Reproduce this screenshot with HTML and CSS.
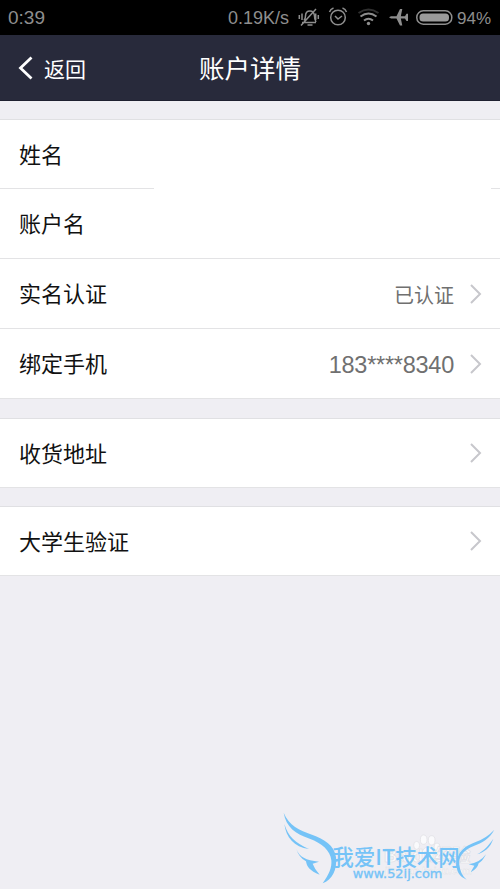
FILE: index.html
```html
<!DOCTYPE html>
<html lang="zh-CN">
<head>
<meta charset="utf-8">
<title>账户详情</title>
<link rel="stylesheet" href="styles.css">
</head>
<body>
<div class="status">
  <span class="time">0:39</span>
  <span class="speed">0.19K/s</span>
  <svg class="icons" width="157" height="35" viewBox="0 0 157 35" fill="none" stroke="#8e8e8e" stroke-width="1.500">
    <path d="M6 22.500h14M8 20.500q1.500-2 1.500-4.500q0-5 4.500-5q4 0 4.500 5q0 3 1.500 6M11.500 25h5M5 25.500L20 9"/>
    <path d="M3.300 15v4M6 13.500v6.500M19.700 13.500v6.500M22.300 15v4"/>
    <circle cx="42" cy="17.500" r="7.300"/>
    <path d="M39 16l3 3 4-3M33.500 12q1-3 4-4M50.500 12q-1-3-4-4"/>
    <path d="M62.500 13q10-7 20 0" stroke="#303030" stroke-width="2"/>
    <path d="M64.500 16.500q8-6 16 0M68 20.500q4.500-3.500 9 0" stroke-width="2"/>
    <circle cx="72.500" cy="23.500" r="1.700" fill="#8e8e8e" stroke="none"/>
    <path d="M93 17.300l2-1.100h5.500L104 9h2.300l-1.500 7.200h4.200l1.500-2.500h1.500v7.200h-1.500l-1.500-2.500h-4.200l1.500 7.200H104l-3.500-7.200H95z" fill="#8e8e8e" stroke="none"/>
    <rect x="120.800" y="10.800" width="35" height="13.400" rx="6.500"/>
    <rect x="123.500" y="13.500" width="29.500" height="8" rx="3.500" fill="#9a9a9a" stroke="none"/>
  </svg>
  <span class="percent">94%</span>
</div>
<header class="nav">
  <svg class="back" width="16" height="26" viewBox="0 0 16 26"><path d="M13.500 2.500L2.500 13l11 10.500" fill="none" stroke="#fff" stroke-width="2.800"/></svg>
  <span class="back-label">返回</span>
  <h1>账户详情</h1>
</header>
<main>
  <section class="group">
    <div class="row first"><span class="label">姓名</span></div>
    <div class="row"><span class="label">账户名</span></div>
    <div class="row"><span class="label">实名认证</span><span class="value">已认证</span><svg class="chevron" width="14" height="22" viewBox="0 0 14 22"><path d="M2 2l9 9-9 9"/></svg></div>
    <div class="row"><span class="label">绑定手机</span><span class="value phone">183****8340</span><svg class="chevron" width="14" height="22" viewBox="0 0 14 22"><path d="M2 2l9 9-9 9"/></svg></div>
  </section>
  <section class="group">
    <div class="row short"><span class="label">收货地址</span><svg class="chevron" width="14" height="22" viewBox="0 0 14 22"><path d="M2 2l9 9-9 9"/></svg></div>
  </section>
  <section class="group last">
    <div class="row short"><span class="label">大学生验证</span><svg class="chevron" width="14" height="22" viewBox="0 0 14 22"><path d="M2 2l9 9-9 9"/></svg></div>
  </section>
</main>
<svg class="watermark" width="230" height="89" viewBox="0 0 690 267">
  <g class="baidu">
    <ellipse cx="440" cy="136" rx="9" ry="12"/><ellipse cx="461" cy="119" rx="10" ry="14"/><ellipse cx="485" cy="121" rx="10" ry="14"/><ellipse cx="501" cy="141" rx="9" ry="12"/>
    <path d="M474 141q13 0 18 19q9 14-5 22h-27q-14-8-5-22q6-19 19-19z"/>
    <text class="baidu-name" x="342" y="187" textLength="260" lengthAdjust="spacingAndGlyphs">Baidu经验</text>
    <text class="baidu-url" x="345" y="221" textLength="260" lengthAdjust="spacingAndGlyphs">jingyan.baidu.com</text>
  </g>
  <g class="wings">
    <path d="M41 38C57 76 88 91 126 104C163 117 193 136 198 171C202 209 187 239 158 250C177 224 186 203 184 181C181 151 156 130 119 116C77 101 48 82 41 38z"/>
    <path d="M43 72C55 111 76 128 117 147C72 142 48 112 43 72z"/>
    <path d="M79 147C88 171 107 181 147 185L128 191Q134 208 149 224C119 213 110 199 108 184Q87 173 79 147z"/>
    <path d="M673 89C658 117 638 127 613 137C578 151 565 171 568 194C570 213 577 228 590 239C568 230 558 214 560 190C562 155 583 139 617 126Q650 114 673 89z"/>
    <path d="M670 116C660 145 644 155 621 163C643 151 654 139 670 116zM648 163C639 181 631 187 626 190Q622 207 602 217L613 197L596 193Q630 188 648 163z"/>
  </g>
  <text class="site-name" x="187" y="194" textLength="382" lengthAdjust="spacingAndGlyphs">我爱IT技术网</text>
  <text class="site-url" x="248" y="234" textLength="269" lengthAdjust="spacingAndGlyphs">www.52ij.com</text>
</svg>
</body>
</html>
```
FILE: styles.css
```css
* { box-sizing: border-box; }
body {
  margin: 0;
  height: 889px;
  overflow: hidden;
  position: relative;
  background: #efeef3;
  color: #111;
  font-family: "Liberation Sans", "Noto Sans CJK SC", sans-serif;
}
.status {
  display: flex;
  align-items: center;
  height: 35px;
  padding-left: 8px;
  background: #000;
  color: #8e8e8e;
  font-size: 18px;
  line-height: 35px;
  white-space: nowrap;
}
.time { width: 220px; font-size: 19px; }
.speed { width: 68px; padding-top: 1px; }
.icons { flex: none; }
.percent { width: 40px; margin-left: 4px; padding-top: 1px; font-size: 17px; }
.nav {
  display: grid;
  grid-template-columns: 26px 155px 1fr;
  align-items: center;
  height: 66px;
  padding-left: 18px;
  border-bottom: 1px solid #1e2030;
  background: #282a3b;
  color: #fff;
}
.back-label { font-size: 21px; }
h1 { margin: 0; padding-top: 2px; font-size: 25.500px; font-weight: 400; line-height: 36px; }
main { display: flex; flex-direction: column; gap: 19px; padding-top: 18px; }
.group { border-top: 1px solid #e0e0e3; background: #fff; }
.last { margin-top: -1px; }
.row {
  display: flex;
  align-items: center;
  height: 70px;
  padding: 0 17px 0 19px;
  border-bottom: 1px solid #e3e3e5;
  font-size: 22px;
}
.label { padding-bottom: 3px; }
.short { height: 69px; }
.first {
  height: 69px;
  border-bottom: 0;
  background: linear-gradient(to right, #e3e3e5 154px, #fff 154px, #fff 491px, #e3e3e5 491px) bottom / 100% 1px no-repeat;
}
.value { margin-left: auto; padding-top: 2px; color: #707070; font-size: 20px; }
.phone { padding-top: 4px; font-size: 23.500px; letter-spacing: -.25px; }
.chevron { margin-left: auto; fill: none; stroke: #c7c7cc; stroke-width: 2; }
.value + .chevron { margin-left: 15px; }
.watermark { position: absolute; left: 270px; top: 800px; }
.wings, .site-name, .site-url { fill: #75c3f7; }
.site-name { font: 500 65px "Noto Sans CJK SC", sans-serif; }
.site-url { font: 35px "DejaVu Sans", sans-serif; stroke: #75c3f7; stroke-width: 1; }
.baidu { fill: #fafafc; stroke: #dedee3; stroke-width: 2; }
.baidu-name { font: 700 54px "Liberation Sans", "Noto Sans CJK SC", sans-serif; }
.baidu-url { font: 700 28px "Liberation Sans", sans-serif; stroke-width: 1; }
```
